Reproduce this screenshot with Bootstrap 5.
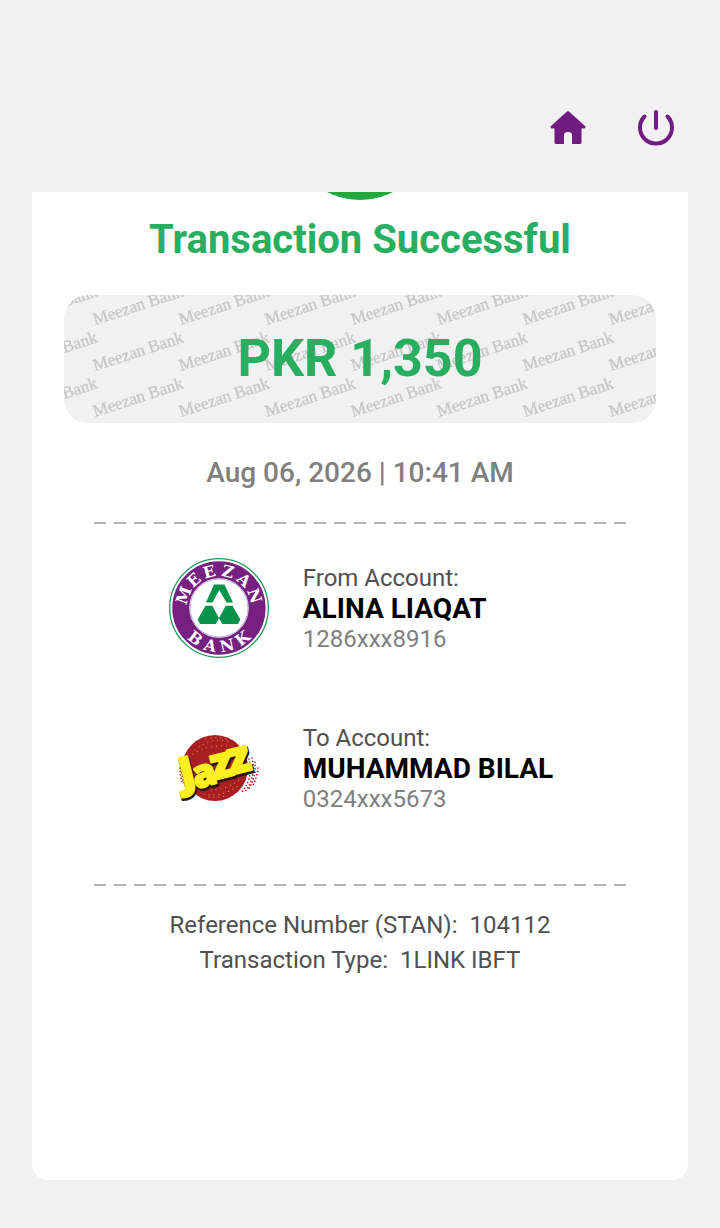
<!DOCTYPE html>
<html lang="en">
<head>
  <meta charset="UTF-8" />
  <meta name="viewport" content="width=device-width, initial-scale=1.0" />
  <title>Transaction Successful</title>
  <link href="https://cdn.jsdelivr.net/npm/bootstrap@5.3.0/dist/css/bootstrap.min.css" rel="stylesheet" />
  <style>
    body {
      background-color: #f1f1f1;
      color: #505050;
      font-family: Roboto, "Liberation Sans", sans-serif;
      font-size: 24px;
      line-height: 32px;
    }

    .top-bar {
      padding: 108px 44px 44px;
      gap: 48px;
    }

    .top-bar svg {
      width: 40px;
      height: 40px;
      display: block;
    }

    .receipt {
      margin: 0 32px 48px;
      padding: 0 32px;
      border-radius: 0 0 16px 16px;
      overflow: hidden;
    }

    /* the receipt is scrolled, only the bottom of the tick shows */
    .tick {
      width: 144px;
      height: 144px;
      margin-top: -136px;
    }

    .green-text {
      color: #27ae60;
    }

    .receipt-title {
      font-size: 40px;
      line-height: 48px;
      font-weight: 700;
      margin: 16px 0 31px;
    }

    .amount-box {
      background-color: #f1f1f1;
      border-radius: 24px;
      height: 128px;
      overflow: hidden;
    }

    .amount {
      font-size: 52px;
      line-height: 64px;
    }

    .watermark text {
      font-family: "Liberation Serif", serif;
      font-size: 17px;
      fill: #c6c6c6;
      stroke: #c6c6c6;
      stroke-width: 0.3px;
    }

    .date-line {
      font-size: 28px;
      font-weight: 500;
      color: #808080;
      margin: 34px 0 33px;
    }

    .dashes {
      height: 2px;
      margin: 0 30px;
      background: repeating-linear-gradient(90deg, #b4b4b4 0 12px, transparent 12px 20px);
    }

    .accounts {
      gap: 60px;
      margin: 34px auto 66px;
      padding-left: 2px;
    }

    .account {
      gap: 34px;
    }

    .account svg {
      width: 100px;
      height: 100px;
    }

    .account-text {
      line-height: 30px;
      padding-top: 1px;
    }

    .account-name {
      font-size: 28px;
      line-height: 31px;
      font-weight: 700;
      color: #000;
    }

    .account-number {
      color: #808080;
    }

    .details {
      margin-top: 22px;
      line-height: 35px;
    }

    .details dt {
      font-weight: 400;
    }

    .details-row {
      gap: 12px;
    }
  </style>
</head>
<body class="d-flex flex-column min-vh-100">

  <header class="top-bar d-flex justify-content-end">
    <a href="#" aria-label="Home">
      <svg viewBox="0 0 40 40"><path d="M20 4.500 36 19 H4 Z M8 17h24v17.500H8z" fill="#701c80" stroke="#701c80" stroke-width="3" stroke-linejoin="round"/><path d="M16 37V27q0-3 4-3t4 3v10z" fill="#f1f1f1"/></svg>
    </a>
    <button type="button" class="btn p-0 border-0" aria-label="Log out">
      <svg viewBox="0 0 40 40" fill="none" stroke="#701c80" stroke-width="4" stroke-linecap="round"><path d="M20 4v16M8.500 8.500a16 16 0 1 0 23 0"/></svg>
    </button>
  </header>

  <main class="receipt bg-white flex-grow-1 d-flex flex-column">
    <svg class="tick align-self-center flex-shrink-0" viewBox="0 0 144 144">
      <circle cx="72" cy="72" r="72" fill="#22a83c"/>
      <path d="M42 74l20 20 40-42" fill="none" stroke="#fff" stroke-width="10"/>
    </svg>

    <h1 class="receipt-title green-text text-center">Transaction Successful</h1>

    <div class="amount-box position-relative d-flex align-items-center justify-content-center">
      <svg class="watermark position-absolute top-0 start-0 w-100 h-100" aria-hidden="true">
        <defs>
          <pattern id="bankName" x="29" y="28" width="86" height="46" patternUnits="userSpaceOnUse">
            <text transform="translate(2 2) rotate(-18)">Meezan Bank</text>
            <text transform="translate(2 48) rotate(-18)">Meezan Bank</text>
            <text transform="translate(-84 2) rotate(-18)">Meezan Bank</text>
            <text transform="translate(-84 48) rotate(-18)">Meezan Bank</text>
            <text transform="translate(88 48) rotate(-18)">Meezan Bank</text>
          </pattern>
        </defs>
        <rect width="100%" height="100%" fill="url(#bankName)"/>
      </svg>
      <div class="amount green-text fw-bold position-relative">PKR 1,350</div>
    </div>

    <div class="date-line text-center">Aug 06, 2026 | 10:41 AM</div>

    <div class="dashes"></div>

    <div class="accounts d-flex flex-column">
      <div class="account d-flex align-items-center">
        <svg viewBox="0 0 100 100" role="img" aria-label="Meezan Bank">
          <circle cx="50" cy="50" r="49.300" fill="#fff" stroke="#199b5c" stroke-width="1.300"/>
          <circle cx="50" cy="50" r="38.200" fill="none" stroke="#76217f" stroke-width="17"/>
          <circle cx="50" cy="50" r="29" fill="#fff" stroke="#b9aed0" stroke-width="1"/>
          <g fill="#fff" font-family="DejaVu Serif, serif" font-weight="700" font-size="16" text-anchor="middle">
            <text x="50" y="18" transform="rotate(-70 50 50)">M</text>
            <text x="50" y="18" transform="rotate(-42 50 50)">E</text>
            <text x="50" y="18" transform="rotate(-15 50 50)">E</text>
            <text x="50" y="18" transform="rotate(14 50 50)">Z</text>
            <text x="50" y="18" transform="rotate(42 50 50)">A</text>
            <text x="50" y="18" transform="rotate(71 50 50)">N</text>
            <text x="50" y="94" transform="rotate(38 50 50)">B</text>
            <text x="50" y="94" transform="rotate(13 50 50)">A</text>
            <text x="50" y="94" transform="rotate(-12 50 50)">N</text>
            <text x="50" y="94" transform="rotate(-38 50 50)">K</text>
          </g>
          <g fill="#079349">
            <path d="M45 26.500h10.500L64 44.500h-6.500L50.200 32 43.500 44.500H37z"/>
            <path d="M36.500 47.700h6.800L50 60l-3.200 6H31l-2.300-4.500z"/>
            <path d="M63.500 47.700h-6.800L50 60l3.200 6H69l2.300-4.500z"/>
          </g>
        </svg>
        <div class="account-text">
          <div>From Account:</div>
          <div class="account-name">ALINA LIAQAT</div>
          <div class="account-number">1286xxx8916</div>
        </div>
      </div>

      <div class="account d-flex align-items-center">
        <svg viewBox="0 0 100 100" role="img" aria-label="Jazz">
          <defs>
            <g id="jazzWord">
              <text font-size="42" transform="translate(14 70) rotate(-14)">J</text>
              <text font-size="38" transform="translate(27 71) rotate(-16)">a</text>
              <text font-size="43" transform="translate(45 62) rotate(-14)">z</text>
              <text font-size="45" transform="translate(62 57) rotate(-14)">z</text>
            </g>
          </defs>
          <g fill="none" stroke="#b3202a" stroke-width="1.700" stroke-linecap="round" stroke-dasharray="0 3.400">
            <path d="M80 41a36 36 0 0 1-8 34"/>
            <path d="M83 40a39 39 0 0 1-8 35"/>
            <path d="M86 44a42 42 0 0 1-7 28"/>
            <path d="M89 50a45 45 0 0 1-5 17"/>
            <path d="M13 48a36 36 0 0 0 4 21"/>
            <path d="M11 50a39 39 0 0 0 3 16"/>
          </g>
          <circle cx="46" cy="50" r="33" fill="#a91e22"/>
          <g fill="none" stroke="#e8a327" stroke-width="1.200" stroke-linecap="round" stroke-dasharray="0 5">
            <path d="M26 32q16-14 36-8"/>
            <path d="M24 36q18-10 36-8"/>
            <path d="M37 21q10-3 20 0"/>
            <path d="M35 76q18 4 35-9"/>
            <path d="M42 72q16 0 31-12"/>
            <path d="M40 79q6 1 17-1"/>
          </g>
          <g font-family="Open Sans, Roboto, sans-serif" font-weight="800" stroke-linejoin="round">
            <use href="#jazzWord" x="1" y="2" fill="#24170f" stroke="#24170f" stroke-width="3"/>
            <use href="#jazzWord" fill="#fcee1f" stroke="#fcee1f" stroke-width="2"/>
          </g>
        </svg>
        <div class="account-text">
          <div>To Account:</div>
          <div class="account-name">MUHAMMAD BILAL</div>
          <div class="account-number">0324xxx5673</div>
        </div>
      </div>
    </div>

    <div class="dashes"></div>

    <dl class="details mb-4">
      <div class="details-row d-flex justify-content-center">
        <dt>Reference Number (STAN):</dt>
        <dd class="m-0">104112</dd>
      </div>
      <div class="details-row d-flex justify-content-center">
        <dt>Transaction Type:</dt>
        <dd class="m-0">1LINK IBFT</dd>
      </div>
    </dl>
  </main>

  <script src="https://cdn.jsdelivr.net/npm/bootstrap@5.3.0/dist/js/bootstrap.bundle.min.js"></script>
</body>
</html>
